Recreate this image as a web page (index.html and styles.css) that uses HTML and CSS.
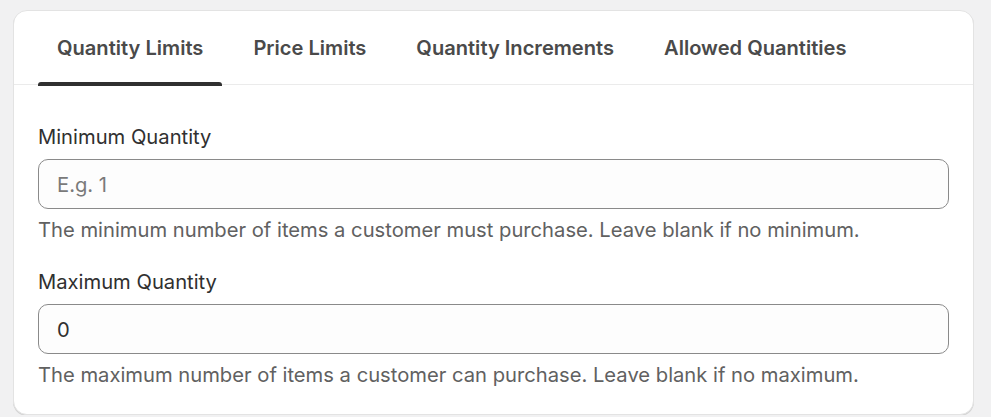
FILE: index.html
```html
<!DOCTYPE html>
<html>
<head>
<meta charset="utf-8">
<link rel="stylesheet" href="styles.css">
</head>
<body>
<div class="card">
  <div class="tabs">
    <div class="tab active">Quantity Limits</div>
    <div class="tab">Price Limits</div>
    <div class="tab">Quantity Increments</div>
    <div class="tab">Allowed Quantities</div>
  </div>
  <div class="body">
    <div class="field">
      <label class="label">Minimum Quantity</label>
      <div class="input placeholder">E.g. 1</div>
      <div class="help">The minimum number of items a customer must purchase. Leave blank if no minimum.</div>
    </div>
    <div class="field">
      <label class="label">Maximum Quantity</label>
      <div class="input">0</div>
      <div class="help">The maximum number of items a customer can purchase. Leave blank if no maximum.</div>
    </div>
  </div>
</div>
</body>
</html>
```

FILE: styles.css
```css
* { box-sizing: border-box; }
html, body { margin: 0; padding: 0; }
body {
  background: #f1f1f2;
  font-family: Inter, "Noto Sans", sans-serif;
  color: #303030;
  padding: 10px 17px 0 13px;
}
.card {
  background: #fff;
  border: 1px solid #e3e3e3;
  border-radius: 14px;
  box-shadow: 0 1px 0 #d4d4d4;
  height: 405px;
  overflow: hidden;
}
.tabs {
  display: flex;
  gap: 12px;
  padding: 0 24px;
  border-bottom: 1px solid #ebebeb;
  height: 74px;
}
.tab {
  position: relative;
  padding: 0 19px 0 19px;
  font-size: 20.1px;
  font-weight: 600;
  color: #4a4a4a;
  display: flex;
  align-items: center;
  height: 74px;
  padding-bottom: 1px;
}
.tab.active::after {
  content: "";
  position: absolute;
  left: 0; right: 0; bottom: -1px;
  height: 4px;
  background: #303030;
  border-radius: 3px 3px 0 0;
}
.body {
  padding: 40px 24px 0 24px;
  display: flex;
  flex-direction: column;
  gap: 28px;
}
.field { display: flex; flex-direction: column; }
.label {
  font-size: 20.2px;
  line-height: 24px;
  margin-bottom: 10px;
  color: #303030;
}
.input {
  height: 50px;
  border: 1px solid #8a8a8a;
  border-radius: 10px;
  background: #fdfdfd;
  padding: 0 18px;
  display: flex;
  align-items: center;
  font-size: 20.2px;
  color: #303030;
}
.input.placeholder { color: #7a7a7a; }
.help {
  margin-top: 9px;
  font-size: 20.2px;
  line-height: 24px;
  color: #616161;
}
```
